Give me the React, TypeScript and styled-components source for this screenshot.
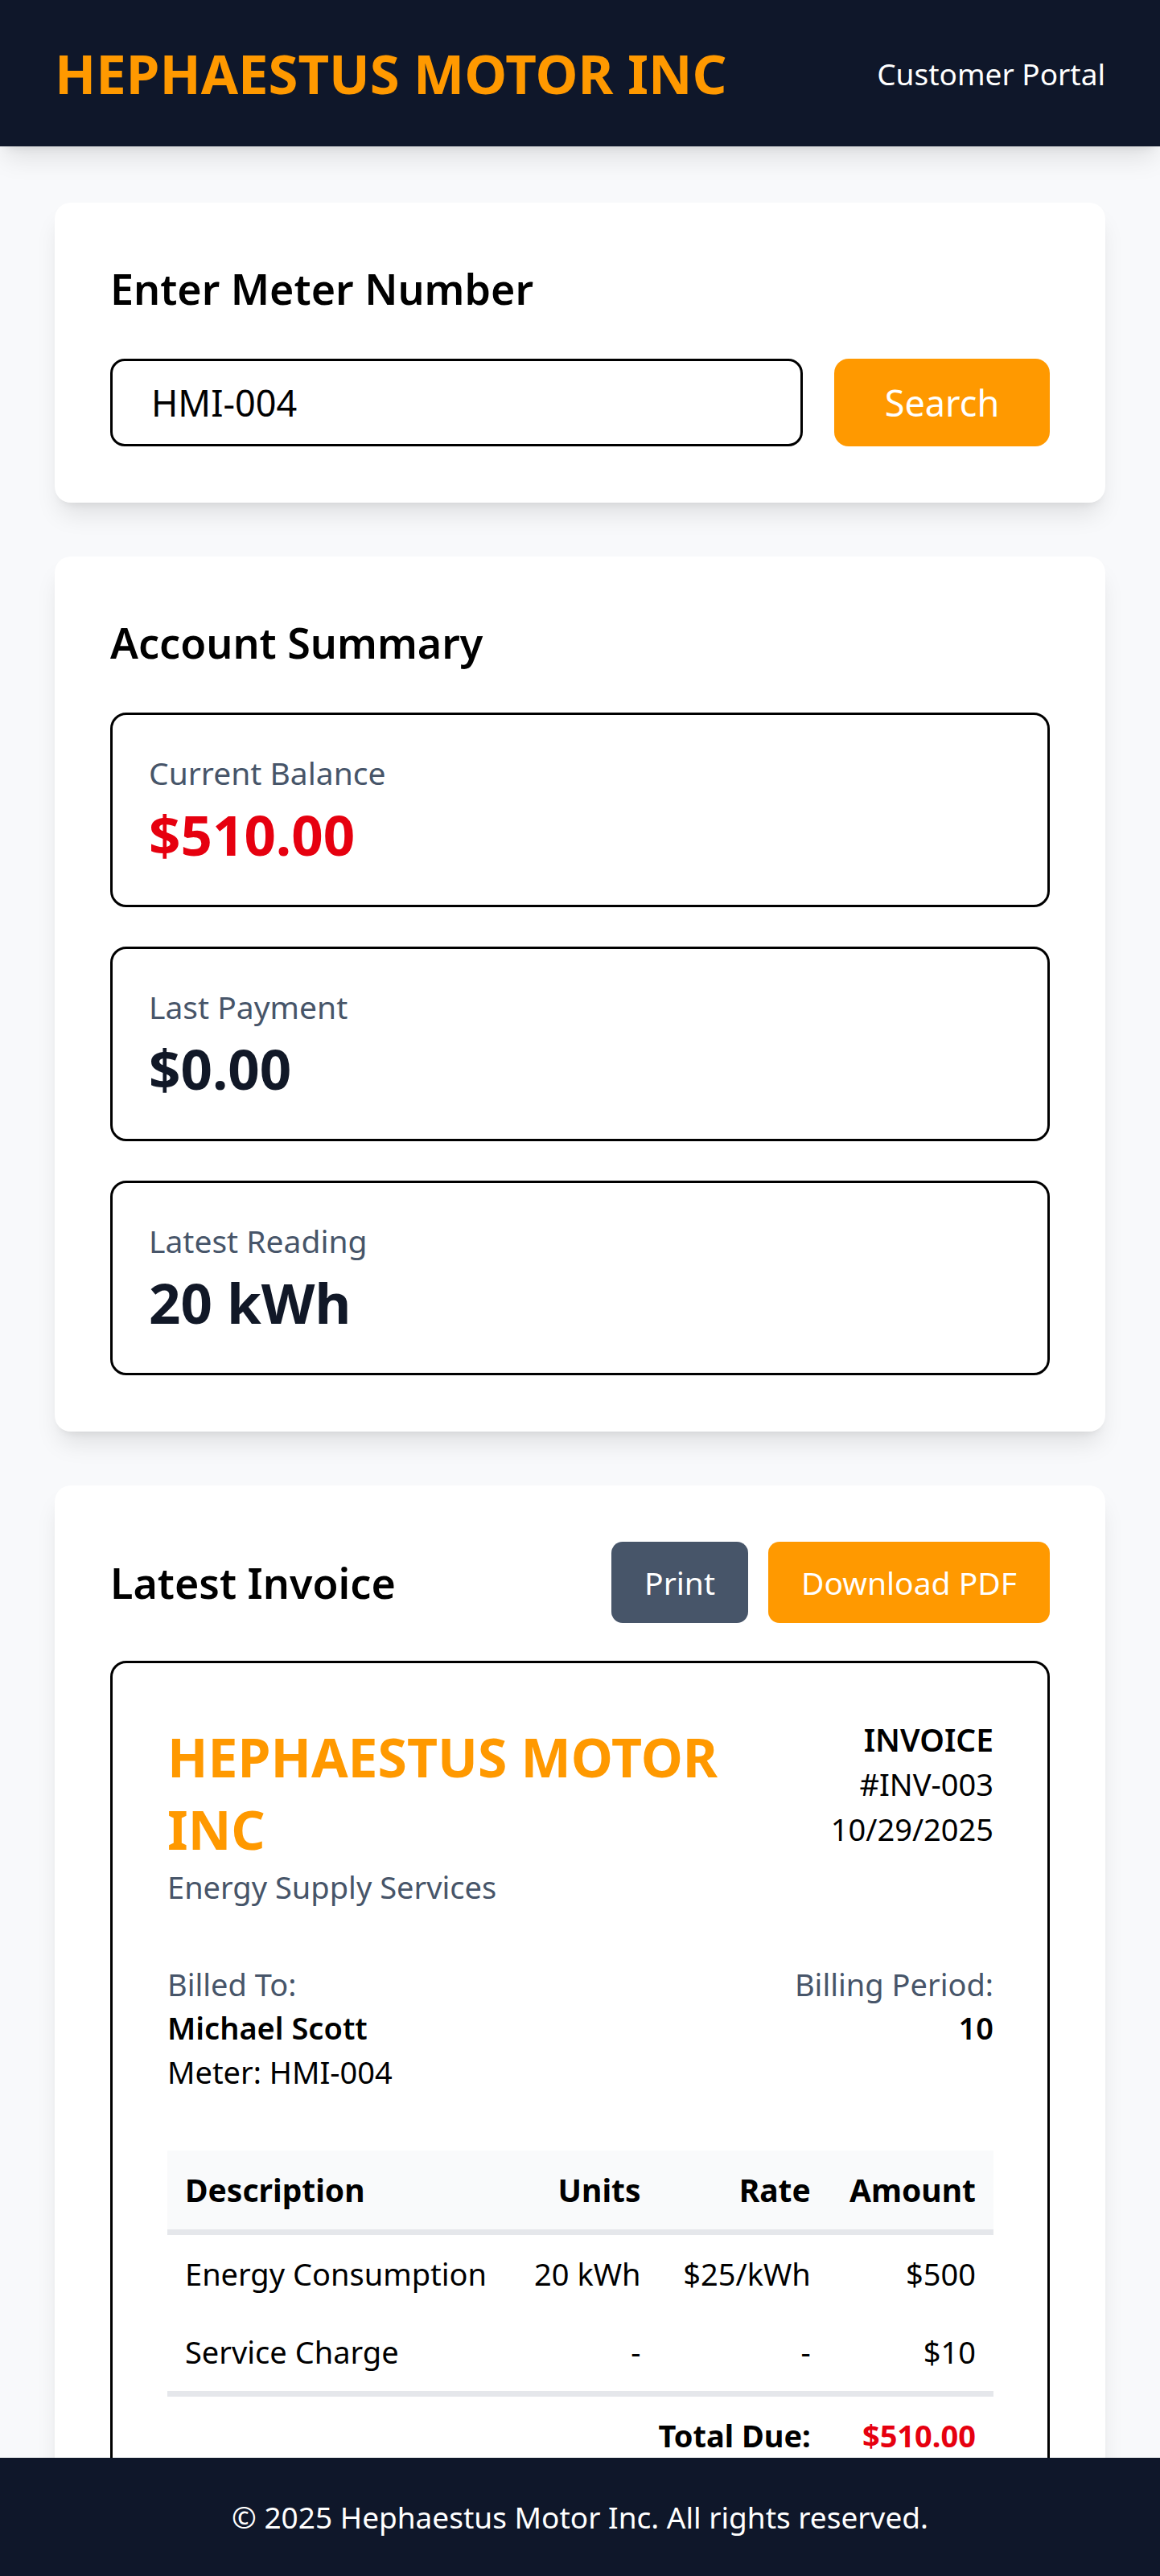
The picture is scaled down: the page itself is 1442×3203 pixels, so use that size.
import styled, { createGlobalStyle } from 'styled-components';

const GlobalStyle = createGlobalStyle`
  * { box-sizing: border-box; }
  body {
    margin: 0;
    background: #f8f9fb;
    font-family: "Noto Sans", "Open Sans", sans-serif;
    color: #000;
  }
`;

const Page = styled.div`
  display: flex;
  flex-direction: column;
  height: 100vh;
`;

const Header = styled.header`
  position: relative;
  z-index: 2;
  flex: none;
  height: 182px;
  padding: 0 68px;
  display: flex;
  align-items: center;
  justify-content: space-between;
  background: #0f172a;
  box-shadow: 0 20px 30px -6px rgba(0, 0, 0, 0.1), 0 8px 12px -8px rgba(0, 0, 0, 0.1);
`;

const Brand = styled.h1`
  margin: 0;
  font-size: 67px;
  font-weight: 700;
  color: #ff9900;
`;

const NavLink = styled.a`
  font-size: 37px;
  color: #fff;
  text-decoration: none;
`;

const Main = styled.main`
  flex: 1;
  overflow: hidden;
  padding: 70px 68px;
  display: flex;
  flex-direction: column;
  gap: 67px;
`;

const Card = styled.section`
  flex: none;
  background: #fff;
  border-radius: 20px;
  padding: 70px 69px;
  box-shadow: 0 20px 30px -6px rgba(0, 0, 0, 0.1), 0 8px 12px -8px rgba(0, 0, 0, 0.1);
`;

const CardTitle = styled.h2<{ $flush?: boolean }>`
  margin: 0 0 ${(p) => (p.$flush ? '0' : '50px')};
  font-size: 52px;
  line-height: 74px;
  font-weight: 600;
`;

const SearchRow = styled.div`
  display: flex;
  gap: 39px;
`;

const MeterInput = styled.input`
  flex: 1;
  min-width: 0;
  height: 109px;
  padding: 0 48px;
  border: 3px solid #000;
  border-radius: 18px;
  font: inherit;
  font-size: 45px;
  color: #000;
  background: #fff;
  outline: none;
`;

const Button = styled.button<{ $tone: 'orange' | 'slate' }>`
  border: none;
  border-radius: 14px;
  color: #fff;
  font-family: inherit;
  cursor: pointer;
  background: ${(p) => (p.$tone === 'orange' ? '#ff9900' : '#475569')};
`;

const SearchButton = styled(Button)`
  width: 268px;
  height: 109px;
  border-radius: 18px;
  font-size: 45px;
`;

const StatList = styled.div`
  display: flex;
  flex-direction: column;
  gap: 49px;
`;

const StatBox = styled.div`
  border: 3px solid #000;
  border-radius: 20px;
  padding: 45px 45px;
`;

const StatLabel = styled.div`
  font-size: 39px;
  line-height: 54px;
  color: #475569;
`;

const StatValue = styled.div<{ $alert?: boolean }>`
  margin-top: 6px;
  font-size: 69px;
  line-height: 86px;
  font-weight: 700;
  color: ${(p) => (p.$alert ? '#e6000f' : '#111827')};
`;

const InvoiceHead = styled.div`
  display: flex;
  align-items: center;
  justify-content: space-between;
  margin-bottom: 47px;
`;

const Actions = styled.div`
  display: flex;
  gap: 25px;
`;

const ActionButton = styled(Button)`
  height: 101px;
  padding: 0 41px;
  font-size: 39px;
`;

const InvoiceBox = styled.div`
  border: 3px solid #000;
  border-radius: 20px;
  padding: 68px 67px 68px 68px;
`;

const InvoiceTop = styled.div`
  display: flex;
  justify-content: space-between;
  align-items: flex-start;
  gap: 40px;
  margin-bottom: 67px;
`;

const Company = styled.div`
  font-size: 66px;
  line-height: 90px;
  font-weight: 700;
  color: #ff9900;
  margin-top: 3px;
`;

const Muted = styled.div`
  font-size: 38px;
  line-height: 54px;
  color: #475569;
`;

const RightBlock = styled.div`
  flex: none;
  text-align: right;
`;

const InvoiceTag = styled.div`
  font-size: 39px;
  line-height: 54px;
  font-weight: 600;
`;

const Meta = styled.div`
  font-size: 38px;
  line-height: 56px;
`;

const BillingRow = styled.div`
  display: flex;
  justify-content: space-between;
  margin-bottom: 70px;
`;

const Line = styled.div<{ $bold?: boolean }>`
  font-size: 38px;
  line-height: 55px;
  font-weight: ${(p) => (p.$bold ? 600 : 400)};
`;

const Table = styled.table`
  width: 100%;
  border-collapse: collapse;
  table-layout: fixed;

  thead tr {
    background: #f9fafb;
    border-bottom: 7px solid #e5e7eb;
  }
  tfoot tr {
    border-top: 7px solid #e5e7eb;
  }
`;

const Th = styled.th<{ $right?: boolean; $w: number }>`
  width: ${(p) => p.$w}px;
  padding: 22px 22px;
  font-size: 39px;
  line-height: 54px;
  font-weight: 700;
  text-align: ${(p) => (p.$right ? 'right' : 'left')};
  white-space: nowrap;
`;

const Td = styled.td<{ $right?: boolean; $bold?: boolean; $red?: boolean }>`
  padding: 22px 22px;
  font-size: 38px;
  line-height: 53px;
  text-align: ${(p) => (p.$right ? 'right' : 'left')};
  font-weight: ${(p) => (p.$bold ? 700 : 400)};
  color: ${(p) => (p.$red ? '#e6000f' : '#000')};
  white-space: nowrap;
`;

const Footer = styled.footer`
  flex: none;
  height: 147px;
  display: flex;
  align-items: center;
  justify-content: center;
  background: #0f172a;
  color: #fff;
  font-size: 37px;
`;

const items = [
  { desc: 'Energy Consumption', units: '20 kWh', rate: '$25/kWh', amount: '$500' },
  { desc: 'Service Charge', units: '-', rate: '-', amount: '$10' },
];

export default function App() {
  return (
    <Page>
      <GlobalStyle />
      <Header>
        <Brand>HEPHAESTUS MOTOR INC</Brand>
        <NavLink href="#">Customer Portal</NavLink>
      </Header>

      <Main>
        <Card>
          <CardTitle>Enter Meter Number</CardTitle>
          <SearchRow>
            <MeterInput defaultValue="HMI-004" />
            <SearchButton $tone="orange">Search</SearchButton>
          </SearchRow>
        </Card>

        <Card>
          <CardTitle>Account Summary</CardTitle>
          <StatList>
            <StatBox>
              <StatLabel>Current Balance</StatLabel>
              <StatValue $alert>$510.00</StatValue>
            </StatBox>
            <StatBox>
              <StatLabel>Last Payment</StatLabel>
              <StatValue>$0.00</StatValue>
            </StatBox>
            <StatBox>
              <StatLabel>Latest Reading</StatLabel>
              <StatValue>20 kWh</StatValue>
            </StatBox>
          </StatList>
        </Card>

        <Card>
          <InvoiceHead>
            <CardTitle $flush>Latest Invoice</CardTitle>
            <Actions>
              <ActionButton $tone="slate">Print</ActionButton>
              <ActionButton $tone="orange">Download PDF</ActionButton>
            </Actions>
          </InvoiceHead>

          <InvoiceBox>
            <InvoiceTop>
              <div>
                <Company>HEPHAESTUS MOTOR INC</Company>
                <Muted>Energy Supply Services</Muted>
              </div>
              <RightBlock>
                <InvoiceTag>INVOICE</InvoiceTag>
                <Meta>#INV-003</Meta>
                <Meta>10/29/2025</Meta>
              </RightBlock>
            </InvoiceTop>

            <BillingRow>
              <div>
                <Muted>Billed To:</Muted>
                <Line $bold>Michael Scott</Line>
                <Line>Meter: HMI-004</Line>
              </div>
              <RightBlock>
                <Muted>Billing Period:</Muted>
                <Line $bold>10</Line>
              </RightBlock>
            </BillingRow>

            <Table>
              <thead>
                <tr>
                  <Th $w={423}>Description</Th>
                  <Th $w={187} $right>Units</Th>
                  <Th $w={211} $right>Rate</Th>
                  <Th $w={205} $right>Amount</Th>
                </tr>
              </thead>
              <tbody>
                {items.map((it) => (
                  <tr key={it.desc}>
                    <Td>{it.desc}</Td>
                    <Td $right>{it.units}</Td>
                    <Td $right>{it.rate}</Td>
                    <Td $right>{it.amount}</Td>
                  </tr>
                ))}
              </tbody>
              <tfoot>
                <tr>
                  <Td colSpan={3} $right $bold>Total Due:</Td>
                  <Td $right $bold $red>$510.00</Td>
                </tr>
              </tfoot>
            </Table>
          </InvoiceBox>
        </Card>
      </Main>

      <Footer>© 2025 Hephaestus Motor Inc. All rights reserved.</Footer>
    </Page>
  );
}
